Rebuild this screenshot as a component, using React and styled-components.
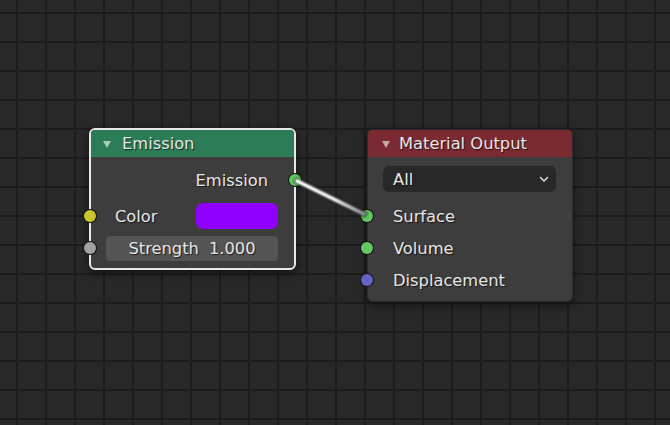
import React from "react";
import styled, { createGlobalStyle } from "styled-components";

const Global = createGlobalStyle`
  html, body { margin: 0; padding: 0; background: #282828; }
  body { font-family: "DejaVu Sans", "Liberation Sans", sans-serif; }
`;

const Canvas = styled.div`
  position: relative;
  width: 670px;
  height: 425px;
  overflow: hidden;
  background-color: #282828;
  background-image:
    linear-gradient(to right, #1c1c1c 0, #1c1c1c 2px, transparent 2px),
    linear-gradient(to bottom, #1c1c1c 0, #1c1c1c 2px, transparent 2px);
  background-size: 29px 29px;
  background-position: 16px 12px;
`;

const LinkLayer = styled.svg`
  position: absolute;
  left: 0;
  top: 0;
  pointer-events: none;
`;

const Node = styled.div`
  position: absolute;
  left: ${(p) => p.$x}px;
  top: ${(p) => p.$y}px;
  width: ${(p) => p.$w}px;
  box-sizing: border-box;
  border-radius: 6px;
  background: #3d3d3d;
  border: ${(p) => (p.$active ? "2px solid #e8e8e8" : "1px solid #2a2a2a")};
  box-shadow: 0 3px 8px rgba(0, 0, 0, 0.55);
  color: #e6e6e6;
  font-size: 16.3px;
  text-shadow: 1px 1px 1px rgba(0, 0, 0, 0.65);
`;

const Header = styled.div`
  height: 27px;
  display: flex;
  align-items: center;
  gap: ${(p) => p.$gap}px;
  padding-left: ${(p) => p.$pad}px;
  background: ${(p) => p.$color};
  border-radius: 4px 4px 0 0;
`;

const Arrow = styled.span`
  width: 0;
  height: 0;
  border-left: 4px solid transparent;
  border-right: 4px solid transparent;
  border-top: 7px solid ${(p) => p.$color};
  margin-top: 2px;
`;

const Body = styled.div`
  display: flex;
  flex-direction: column;
  padding: ${(p) => p.$pt}px 0 ${(p) => p.$pb}px;
`;

const Row = styled.div`
  position: relative;
  height: 32px;
  display: flex;
  align-items: center;
  justify-content: ${(p) => p.$justify || "flex-start"};
  padding: 0 ${(p) => p.$pr || 0}px 0 ${(p) => p.$pl || 0}px;
  margin-bottom: ${(p) => p.$mb || 0}px;
`;

const Socket = styled.span`
  position: absolute;
  top: 50%;
  ${(p) => (p.$side === "right" ? "right" : "left")}: ${(p) => p.$off}px;
  width: 12px;
  height: 12px;
  margin-top: -6px;
  border-radius: 50%;
  background: ${(p) => p.$color};
  box-shadow: 0 0 0 1px #141414;
`;

const Label = styled.span`
  white-space: nowrap;
`;

const Swatch = styled.div`
  margin-left: auto;
  width: 82px;
  height: 26px;
  border-radius: 7px;
  background: #8f00ff;
`;

const NumField = styled.div`
  flex: 1;
  height: 25px;
  border-radius: 4px;
  background: #545454;
  display: flex;
  align-items: center;
  justify-content: center;
  gap: 10px;
`;

const Dropdown = styled.div`
  flex: 1;
  height: 26px;
  border-radius: 6px;
  background: #282828;
  display: flex;
  align-items: center;
  justify-content: space-between;
  padding: 0 6px 0 10px;
  box-sizing: border-box;
`;

const Chevron = () => (
  <svg width="12" height="12" viewBox="0 0 12 12">
    <path d="M2.5 4.5 L6 8 L9.5 4.5" fill="none" stroke="#d8d8d8" strokeWidth="1.6" strokeLinecap="round" strokeLinejoin="round" />
  </svg>
);

export default function App() {
  return (
    <>
      <Global />
      <Canvas>
        <Node $x={89} $y={128} $w={207} $active>
          <Header $color="#2b7c57" $pad={12} $gap={11}>
            <Arrow $color="#a9cbb8" />
            <Label>Emission</Label>
          </Header>
          <Body $pt={7} $pb={4}>
            <Row $justify="flex-end" $pr={26} $mb={4}>
              <Label>Emission</Label>
              <Socket $side="right" $off={-7} $color="#63c763" />
            </Row>
            <Row $pl={24} $pr={16}>
              <Socket $off={-7} $color="#c7c729" />
              <Label>Color</Label>
              <Swatch />
            </Row>
            <Row $pl={15} $pr={16}>
              <Socket $off={-7} $color="#a1a1a1" />
              <NumField>
                <Label>Strength</Label>
                <Label>1.000</Label>
              </NumField>
            </Row>
          </Body>
        </Node>

        <Node $x={367} $y={129} $w={206}>
          <Header $color="#7a2a30" $pad={14} $gap={9}>
            <Arrow $color="#c8a6a8" />
            <Label>Material Output</Label>
          </Header>
          <Body $pt={6} $pb={5}>
            <Row $pl={15} $pr={16} $mb={5}>
              <Dropdown>
                <Label>All</Label>
                <Chevron />
              </Dropdown>
            </Row>
            <Row $pl={25}>
              <Socket $off={-7} $color="#63c763" />
              <Label>Surface</Label>
            </Row>
            <Row $pl={25}>
              <Socket $off={-7} $color="#63c763" />
              <Label>Volume</Label>
            </Row>
            <Row $pl={25}>
              <Socket $off={-7} $color="#6363c7" />
              <Label>Displacement</Label>
            </Row>
          </Body>
        </Node>

        <LinkLayer width="670" height="425">
          <defs>
            <linearGradient id="lk" x1="294" y1="180" x2="367" y2="216" gradientUnits="userSpaceOnUse">
              <stop offset="0" stopColor="#f4f4f4" />
              <stop offset="0.55" stopColor="#e4e4e4" />
              <stop offset="1" stopColor="#7a7a7a" />
            </linearGradient>
            <filter id="glow" x="-20%" y="-40%" width="140%" height="180%">
              <feGaussianBlur stdDeviation="1.2" />
            </filter>
          </defs>
          <line x1="297" y1="181" x2="364" y2="214" stroke="rgba(0,0,0,0.5)" strokeWidth="7" strokeLinecap="round" filter="url(#glow)" />
          <line x1="297" y1="181" x2="364" y2="214" stroke="url(#lk)" strokeWidth="4" strokeLinecap="round" filter="url(#glow)" />
          <line x1="297" y1="181" x2="364" y2="214" stroke="url(#lk)" strokeWidth="2" strokeLinecap="round" />
        </LinkLayer>
      </Canvas>
    </>
  );
}
